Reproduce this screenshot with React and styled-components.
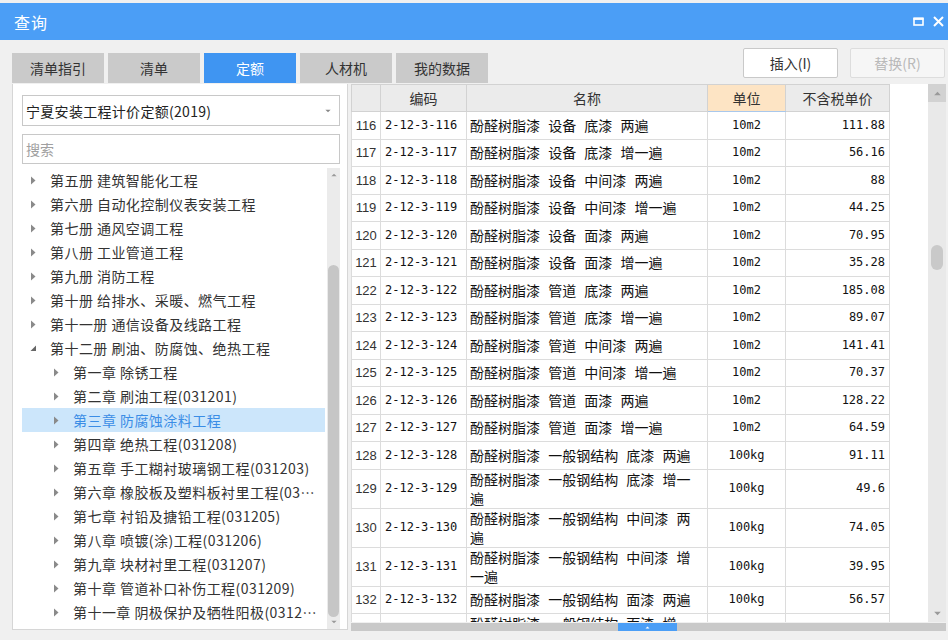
import React from 'react'
import styled, { createGlobalStyle } from 'styled-components'

const GlobalStyle = createGlobalStyle`
  html, body {
    margin: 0;
    padding: 0;
    background: #f0f0f0;
  }
  body {
    font-family: "Noto Sans CJK SC", "Noto Sans", sans-serif;
  }
  * { box-sizing: border-box; }
`

const tabs = ['清单指引', '清单', '定额', '人材机', '我的数据']

const tree = [
  { level: 0, text: '第五册 建筑智能化工程' },
  { level: 0, text: '第六册 自动化控制仪表安装工程' },
  { level: 0, text: '第七册 通风空调工程' },
  { level: 0, text: '第八册 工业管道工程' },
  { level: 0, text: '第九册 消防工程' },
  { level: 0, text: '第十册 给排水、采暖、燃气工程' },
  { level: 0, text: '第十一册 通信设备及线路工程' },
  { level: 0, text: '第十二册 刷油、防腐蚀、绝热工程', open: true },
  { level: 1, text: '第一章 除锈工程' },
  { level: 1, text: '第二章 刷油工程(031201)' },
  { level: 1, text: '第三章 防腐蚀涂料工程', selected: true },
  { level: 1, text: '第四章 绝热工程(031208)' },
  { level: 1, text: '第五章 手工糊衬玻璃钢工程(031203)' },
  { level: 1, text: '第六章 橡胶板及塑料板衬里工程(031204)' },
  { level: 1, text: '第七章 衬铅及搪铅工程(031205)' },
  { level: 1, text: '第八章 喷镀(涂)工程(031206)' },
  { level: 1, text: '第九章 块材衬里工程(031207)' },
  { level: 1, text: '第十章 管道补口补伤工程(031209)' },
  { level: 1, text: '第十一章 阴极保护及牺牲阳极(031210)' },
]

const P = '酚醛树脂漆 '
const rows = [
  [116, [P + '设备 底漆 两遍'], '10m2', '111.88'],
  [117, [P + '设备 底漆 增一遍'], '10m2', '56.16'],
  [118, [P + '设备 中间漆 两遍'], '10m2', '88'],
  [119, [P + '设备 中间漆 增一遍'], '10m2', '44.25'],
  [120, [P + '设备 面漆 两遍'], '10m2', '70.95'],
  [121, [P + '设备 面漆 增一遍'], '10m2', '35.28'],
  [122, [P + '管道 底漆 两遍'], '10m2', '185.08'],
  [123, [P + '管道 底漆 增一遍'], '10m2', '89.07'],
  [124, [P + '管道 中间漆 两遍'], '10m2', '141.41'],
  [125, [P + '管道 中间漆 增一遍'], '10m2', '70.37'],
  [126, [P + '管道 面漆 两遍'], '10m2', '128.22'],
  [127, [P + '管道 面漆 增一遍'], '10m2', '64.59'],
  [128, [P + '一般钢结构 底漆 两遍'], '100kg', '91.11'],
  [129, [P + '一般钢结构 底漆 增一', '遍'], '100kg', '49.6'],
  [130, [P + '一般钢结构 中间漆 两', '遍'], '100kg', '74.05'],
  [131, [P + '一般钢结构 中间漆 增', '一遍'], '100kg', '39.95'],
  [132, [P + '一般钢结构 面漆 两遍'], '100kg', '56.57'],
  [133, [P + '一般钢结构 面漆 增', '一遍'], '100kg', '28.1'],
]

function Tri({ dir = 'right', color = '#888', size = 6 }) {
  if (dir === 'up') {
    return (
      <svg width={size + 2} height={size} viewBox="0 0 8 6">
        <path d="M0 5 L4 1 L8 5 Z" fill={color} />
      </svg>
    )
  }
  if (dir === 'down') {
    return (
      <svg width={size + 2} height={size} viewBox="0 0 8 6">
        <path d="M0 1 L4 5 L8 1 Z" fill={color} />
      </svg>
    )
  }
  if (dir === 'open') {
    return (
      <svg width="7" height="7" viewBox="0 0 7 7">
        <path d="M6 0.5 L6 6 L0.5 6 Z" fill="#666" />
      </svg>
    )
  }
  return (
    <svg width="6" height="9" viewBox="0 0 6 9">
      <path d="M1 0.5 L5.5 4.5 L1 8.5 Z" fill={color} />
    </svg>
  )
}

function App() {
  return (
    <Window>
      <GlobalStyle />
      <TitleBar>
        <Title>查询</Title>
        <WinButton aria-label="最大化">
          <svg width="11" height="9" viewBox="0 0 11 9">
            <rect x="1" y="1.5" width="9" height="6.5" fill="none" stroke="#fff" strokeWidth="1.6" />
            <rect x="0.5" y="0.5" width="10" height="2.4" fill="#fff" />
          </svg>
        </WinButton>
        <WinButton aria-label="关闭">
          <svg width="11" height="11" viewBox="0 0 11 11">
            <path d="M1 1 L10 10 M10 1 L1 10" stroke="#fff" strokeWidth="2" />
          </svg>
        </WinButton>
      </TitleBar>

      <Toolbar>
        <Tabs>
          {tabs.map((t) => (
            <Tab key={t} $active={t === '定额'}>{t}</Tab>
          ))}
        </Tabs>
        <Actions>
          <ActionButton>插入(I)</ActionButton>
          <ActionButton $disabled>替换(R)</ActionButton>
        </Actions>
      </Toolbar>

      <Main>
        <LeftPanel>
          <Select>
            <span>宁夏安装工程计价定额(2019)</span>
            <Tri dir="down" color="#888" size={4} />
          </Select>
          <Search placeholder="搜索" />
          <TreeWrap>
            <TreeList>
              {tree.map((n) => (
                <TreeRow key={n.text} $level={n.level} $selected={n.selected}>
                  <Arrow>
                    {n.open ? <Tri dir="open" /> : <Tri color="#8a8a8a" />}
                  </Arrow>
                  <TreeLabel>{n.text}</TreeLabel>
                </TreeRow>
              ))}
            </TreeList>
            <TreeScroll>
              <ScrollArrow $h={14}><Tri dir="up" color="#999" size={4} /></ScrollArrow>
              <Track>
                <TreeThumb />
              </Track>
              <ScrollArrow $h={14}><Tri dir="down" color="#999" size={4} /></ScrollArrow>
            </TreeScroll>
          </TreeWrap>
        </LeftPanel>

        <RightPanel>
          <TableArea>
            <Grid>
              <Table>
                <colgroup>
                  <col style={{ width: 29 }} />
                  <col style={{ width: 86 }} />
                  <col style={{ width: 241 }} />
                  <col style={{ width: 78 }} />
                  <col style={{ width: 104 }} />
                </colgroup>
                <thead>
                  <tr>
                    <Th />
                    <Th>编码</Th>
                    <Th>名称</Th>
                    <Th $hl>单位</Th>
                    <Th>不含税单价</Th>
                  </tr>
                </thead>
                <tbody>
                  {rows.map(([no, name, unit, price]) => (
                    <Row key={no}>
                      <NoCell>{no}</NoCell>
                      <CodeCell>2-12-3-{no}</CodeCell>
                      <NameCell>
                        {name.map((line) => (
                          <NameLine key={line}>{line}</NameLine>
                        ))}
                      </NameCell>
                      <UnitCell>{unit}</UnitCell>
                      <PriceCell>{price}</PriceCell>
                    </Row>
                  ))}
                </tbody>
              </Table>
            </Grid>
            <VScroll>
              <ScrollButton><Tri dir="up" color="#9a9a9a" size={5} /></ScrollButton>
              <VTrack>
                <VThumb />
              </VTrack>
              <ScrollButton $plain><Tri dir="down" color="#9a9a9a" size={5} /></ScrollButton>
            </VScroll>
          </TableArea>
          <HScroll>
            <HThumb>
              <Tri dir="up" color="#fff" size={3} />
            </HThumb>
          </HScroll>
        </RightPanel>
      </Main>
    </Window>
  )
}

const Window = styled.div`
  width: 948px;
  height: 640px;
  display: flex;
  flex-direction: column;
  background: #f0f0f0;
  overflow: hidden;
`

const TitleBar = styled.div`
  margin-top: 3px;
  height: 37px;
  flex: none;
  display: flex;
  align-items: center;
  padding-left: 14px;
  background: #4b9ef6;
  color: #fff;
`

const Title = styled.div`
  flex: 1;
  font-size: 16px;
  letter-spacing: 1px;
`

const WinButton = styled.button`
  width: 20px;
  height: 24px;
  padding: 0;
  border: 0;
  background: none;
  display: flex;
  align-items: center;
  justify-content: center;
`

const Toolbar = styled.div`
  height: 44px;
  flex: none;
  display: flex;
  padding: 0 3px 0 12px;
`

const Tabs = styled.div`
  display: flex;
  gap: 4px;
  align-self: flex-end;
  margin-bottom: 1px;
`

const Tab = styled.div`
  width: 92px;
  height: 30px;
  display: flex;
  align-items: center;
  justify-content: center;
  font-size: 14px;
  color: ${(p) => (p.$active ? '#fff' : '#333')};
  background: ${(p) => (p.$active ? '#3f95f2' : '#cacaca')};
`

const Actions = styled.div`
  margin-left: auto;
  margin-top: 8px;
  display: flex;
  gap: 12px;
  align-self: flex-start;
`

const ActionButton = styled.button`
  width: 95px;
  height: 30px;
  font-family: inherit;
  font-size: 14px;
  color: ${(p) => (p.$disabled ? '#b9b9b9' : '#333')};
  background: ${(p) => (p.$disabled ? '#f6f6f6' : '#fff')};
  border: 1px solid ${(p) => (p.$disabled ? '#dddddd' : '#c9c9c9')};
  border-radius: 2px;
  padding: 0;
`

const Main = styled.div`
  flex: 1;
  min-height: 0;
  display: flex;
  gap: 3px;
  padding: 0 2px 9px 12px;
`

const LeftPanel = styled.div`
  width: 336px;
  flex: none;
  display: flex;
  flex-direction: column;
  background: #fff;
  border: 1px solid #d6d6d6;
  border-top: 0;
  padding: 11px 7px 0 9px;
  margin-bottom: 1px;
`

const Select = styled.div`
  height: 31px;
  display: flex;
  align-items: center;
  justify-content: space-between;
  padding: 0 8px 0 3px;
  border: 1px solid #c8c8c8;
  font-size: 14px;
  letter-spacing: 0.3px;
  color: #222;
`

const Search = styled.input`
  margin-top: 8px;
  height: 30px;
  border: 1px solid #c8c8c8;
  padding: 0 3px;
  font-family: inherit;
  font-size: 14px;
  outline: none;
  &::placeholder { color: #a0a0a0; }
`

const TreeWrap = styled.div`
  margin-top: 4px;
  flex: 1;
  min-height: 0;
  display: flex;
`

const TreeList = styled.div`
  flex: 1;
  min-width: 0;
  overflow: hidden;
`

const TreeRow = styled.div`
  height: 24px;
  display: flex;
  align-items: center;
  margin-right: 2px;
  padding-left: ${(p) => 6 + p.$level * 23}px;
  background: ${(p) => (p.$selected ? '#cce6fb' : 'transparent')};
  color: ${(p) => (p.$selected ? '#3a8de6' : '#333')};
  font-size: 14px;
`

const Arrow = styled.span`
  width: 20px;
  flex: none;
  display: flex;
  align-items: center;
  padding-left: 2px;
`

const TreeLabel = styled.span`
  margin-left: 2px;
  letter-spacing: 0.45px;
  white-space: nowrap;
  overflow: hidden;
  text-overflow: ellipsis;
  padding-right: 3px;
`

const TreeScroll = styled.div`
  width: 13px;
  flex: none;
  display: flex;
  flex-direction: column;
  background: #ebebeb;
`

const ScrollArrow = styled.div`
  height: ${(p) => p.$h}px;
  flex: none;
  display: flex;
  align-items: center;
  justify-content: center;
`

const Track = styled.div`
  flex: 1;
  min-height: 0;
`

const TreeThumb = styled.div`
  margin: 83px auto 0;
  width: 11px;
  height: 352px;
  border-radius: 6px;
  background: #c6c6c6;
`

const RightPanel = styled.div`
  flex: 1;
  min-width: 0;
  display: flex;
  flex-direction: column;
`

const TableArea = styled.div`
  flex: 1;
  min-height: 0;
  display: flex;
`

const Grid = styled.div`
  flex: 1;
  min-width: 0;
  background: #fff;
  overflow: hidden;
`

const Table = styled.table`
  width: 538px;
  table-layout: fixed;
  border-collapse: collapse;
  font-size: 14px;
  color: #111;
`

const Th = styled.th`
  height: 27px;
  padding: 0;
  font-weight: normal;
  font-size: 14px;
  color: #333;
  background: ${(p) => (p.$hl ? '#fde4c4' : '#ebebeb')};
  border: 1px solid #d2d2d2;
  border-bottom-color: ${(p) => (p.$hl ? '#a9c8ec' : '#d2d2d2')};
`

const Row = styled.tr`
  height: 27.5px;
`

const Cell = styled.td`
  border: 1px solid #dcdcdc;
  padding: 0 3px;
  line-height: 19px;
  white-space: nowrap;
  overflow: hidden;
`

const NoCell = styled(Cell)`
  padding: 0;
  text-align: center;
  font-family: "Liberation Sans", sans-serif;
  font-size: 13px;
  color: #333;
`

const CodeCell = styled(Cell)`
  padding-left: 4px;
  font-family: "DejaVu Sans Mono", monospace;
  font-size: 12px;
`

const NameCell = styled(Cell)`
  word-spacing: 5px;
`

const NameLine = styled.div`
  white-space: nowrap;
`

const UnitCell = styled(Cell)`
  text-align: center;
  font-family: "DejaVu Sans Mono", monospace;
  font-size: 12px;
`

const PriceCell = styled(Cell)`
  text-align: right;
  padding-right: 4px;
  font-family: "DejaVu Sans Mono", monospace;
  font-size: 12px;
`

const VScroll = styled.div`
  width: 18px;
  flex: none;
  display: flex;
  flex-direction: column;
  background: #e9e9e9;
`

const ScrollButton = styled.div`
  height: 18px;
  flex: none;
  display: flex;
  align-items: center;
  justify-content: center;
  background: ${(p) => (p.$plain ? 'transparent' : '#d2d2d2')};
`

const VTrack = styled.div`
  flex: 1;
  min-height: 0;
`

const VThumb = styled.div`
  margin: 143px auto 0;
  width: 12px;
  height: 25px;
  border-radius: 6px;
  background: #c9c9c9;
`

const HScroll = styled.div`
  height: 8px;
  flex: none;
  margin-top: 1px;
  background: #c9c9c9;
  display: flex;
`

const HThumb = styled.div`
  margin-left: 267px;
  width: 59px;
  background: #4b9ef6;
  display: flex;
  align-items: center;
  justify-content: center;
`

export default App
